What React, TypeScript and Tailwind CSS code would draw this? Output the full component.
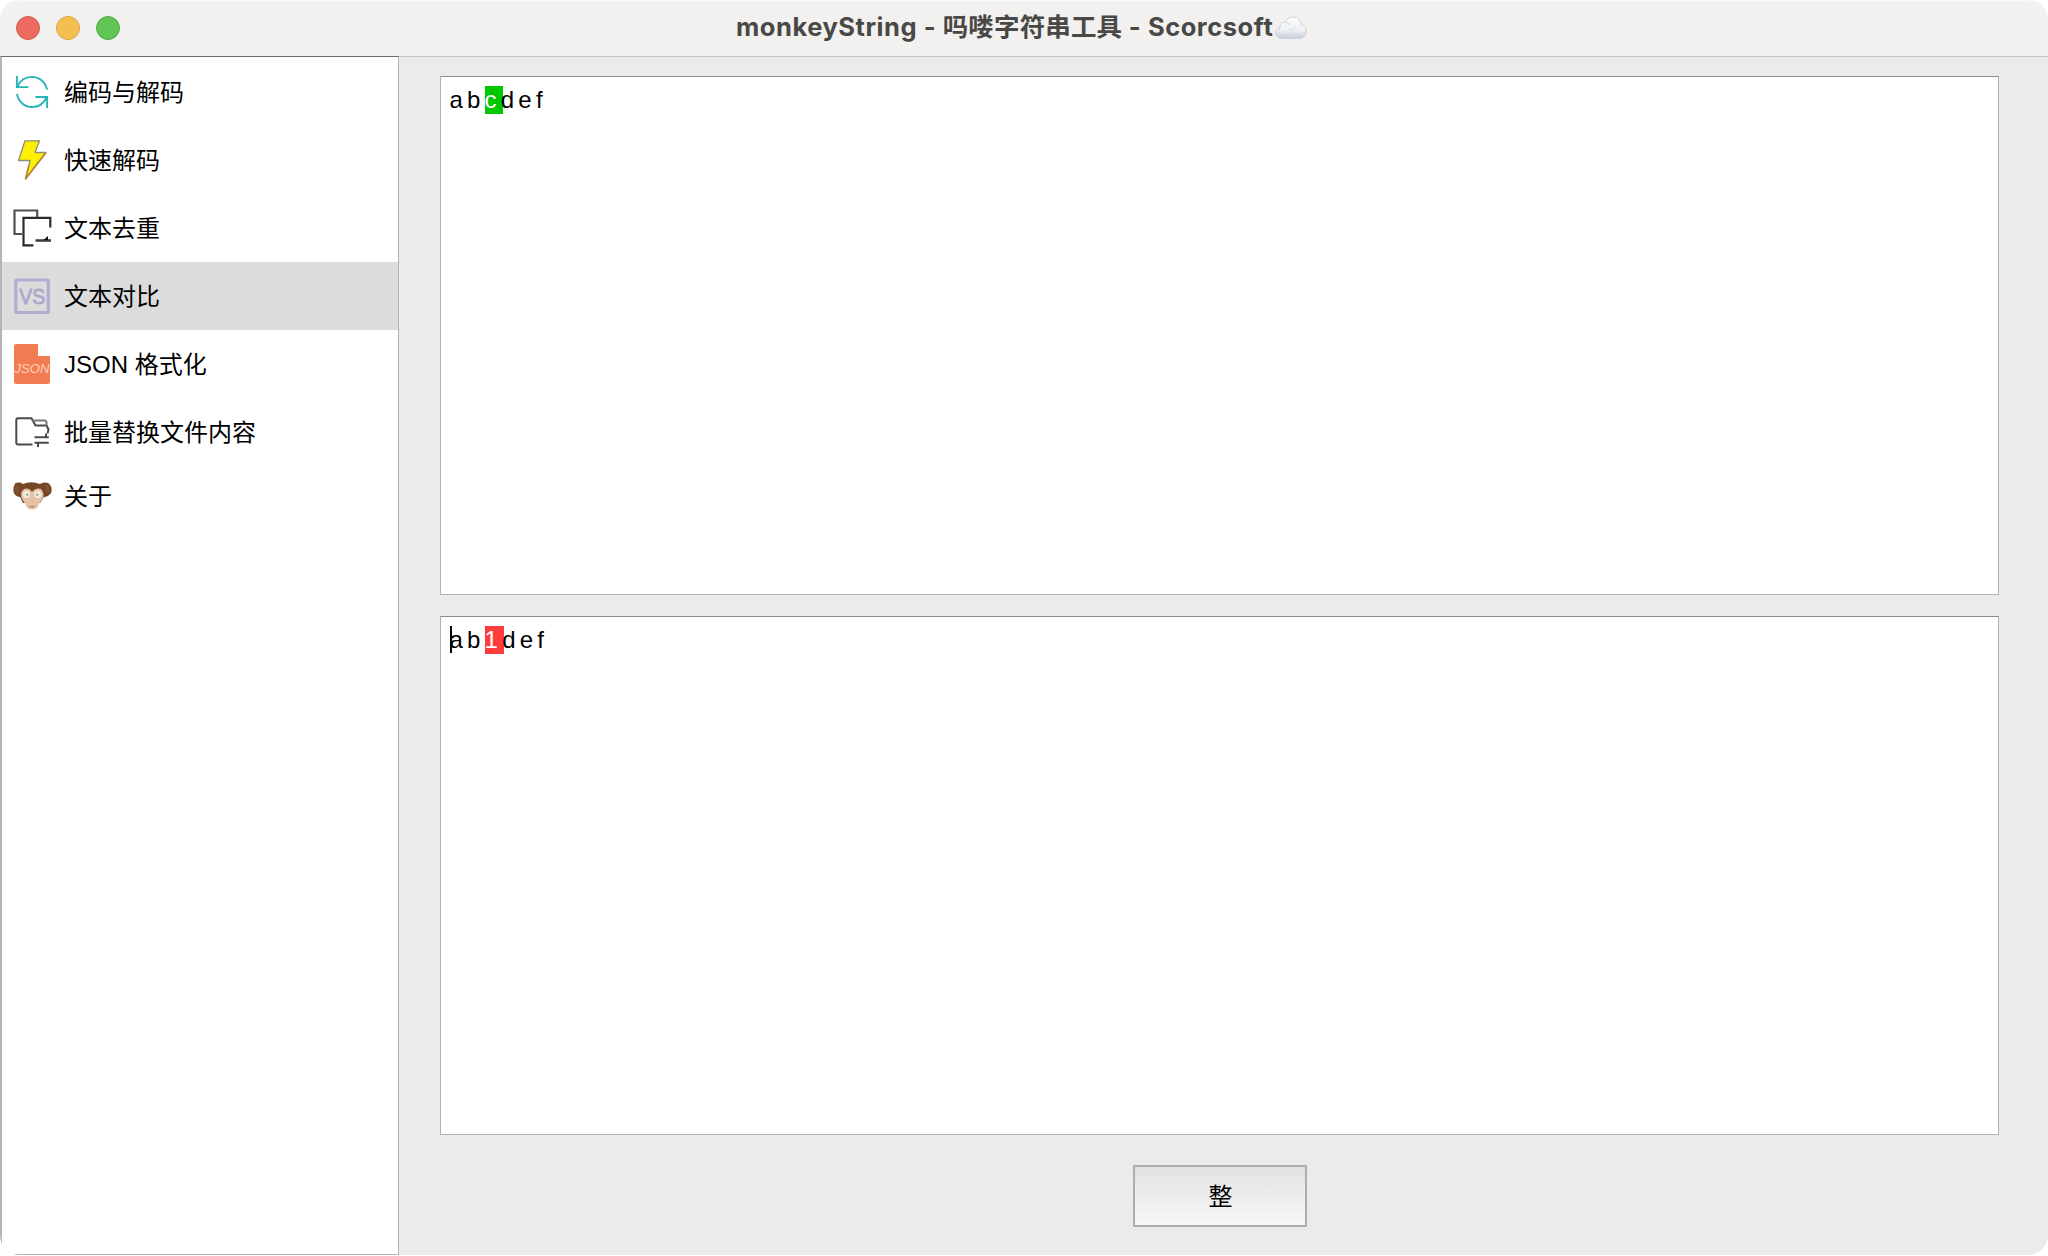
import type { ReactNode } from "react";

function SyncIcon() {
  return (
    <svg width="40" height="40" viewBox="0 0 40 40" fill="none" stroke="#27b5bb" strokeWidth="1.9">
      <path d="M4.9 4v11.1h11.4" />
      <path d="M5.5 14.5C8.5 7.800 14 4.900 20 4.900c7 0 13.200 4.600 15.100 12.700" />
      <path d="M35.100 36V25H23.500" />
      <path d="M34.500 25.500C31.500 32.200 26 35 20 35 13 35 6.800 30.400 4.900 22" />
    </svg>
  );
}

function BoltIcon() {
  return (
    <svg width="40" height="40" viewBox="0 0 40 40" strokeLinejoin="round">
      <path d="M13 0.800H27.500L23 12.500H34L13.500 39L18 20.500H6.500z" fill="#fdf000" stroke="#8e8c78" strokeWidth="1.300" />
      <path d="M34 12.500L13.500 39L17 25" fill="none" stroke="#b8863c" strokeWidth="1.500" />
    </svg>
  );
}

function DedupeIcon() {
  return (
    <svg width="40" height="40" viewBox="0 0 40 40" fill="none" stroke="#2b2b2b" strokeWidth="2.200">
      <path d="M25.200 9V2.500H2.500V26H10" stroke="#505050" />
      <path d="M38.300 19.500V9.900H11.500V37.300H21.500" />
      <path d="M23.500 32.500H39" stroke="#3a3a3a" strokeWidth="2.600" />
      <path d="M31.500 32L36 28V32z" fill="#111" stroke="none" />
    </svg>
  );
}

function VersusIcon() {
  return (
    <svg width="40" height="40" viewBox="0 0 40 40">
      <rect x="3.800" y="4" width="32.500" height="32.500" rx="1" fill="none" stroke="#b3acd0" strokeWidth="3.200" />
      <text x="20.300" y="27.500" textAnchor="middle" textLength="26" lengthAdjust="spacingAndGlyphs" fontSize="22" fontFamily="Liberation Sans, sans-serif" fill="#aea7cd" stroke="#aea7cd" strokeWidth=".8">VS</text>
    </svg>
  );
}

function JsonIcon() {
  return (
    <svg width="40" height="40" viewBox="0 0 40 40">
      <path d="M4 0H26V12H38V38Q38 40 36 40H4Q2 40 2 38V2Q2 0 4 0z" fill="#f27c52" />
      <path d="M27.500 0L38 11H27.500z" fill="#fdeee8" opacity=".4" />
      <text x="20" y="29" textAnchor="middle" textLength="35" lengthAdjust="spacingAndGlyphs" fontSize="13.500" fontStyle="italic" fontFamily="Liberation Sans, sans-serif" fill="#ffd0bc">JSON</text>
    </svg>
  );
}

function FolderSwapIcon() {
  return (
    <svg width="40" height="40" viewBox="0 0 40 40" fill="none" stroke="#4a4a4a" strokeWidth="2" strokeLinejoin="round">
      <path d="M20.500 32.500H6Q4.300 32.500 4.300 30.800V8Q4.300 6.300 6 6.300H19.500L23.500 13.500H34.500L36.500 17.500L35.500 21.500" />
      <path d="M20.500 8.500H33L34.500 10V13.500" stroke="#777" />
      <path d="M22.500 25.300H36.800M34 21.500V25.300" />
      <path d="M22.500 30.700H36.800M26 30.700V35" />
    </svg>
  );
}

function MonkeyIcon() {
  return (
    <svg width="40" height="40" viewBox="0 0 40 40">
      <path d="M3 7.500Q7 5.500 11 8Q19 4.500 28 8Q33 5.500 37 7.500Q41 12 39 17Q36 21 32 21L28 27H11L8 21Q3 20.500 1.500 16Q1 11 3 7.500z" fill="#754726" />
      <ellipse cx="5" cy="13.500" rx="2" ry="4" fill="#80522f" />
      <ellipse cx="35.500" cy="13.500" rx="2" ry="4" fill="#80522f" />
      <path d="M12 13Q17 11 20 16Q24 11 29 13Q33 17 30.500 23Q26 28 26 31Q20 36 14.500 31Q13 27 9.500 22Q8 16 12 13z" fill="#e6c1a4" />
      <circle cx="14.500" cy="18.500" r="3.700" fill="#efe9e0" />
      <circle cx="25.800" cy="18.500" r="3.700" fill="#efe9e0" />
      <circle cx="15.300" cy="18.700" r="1" fill="#8d8782" />
      <circle cx="25.200" cy="18.700" r="1" fill="#8d8782" />
      <path d="M17 30Q20 31.500 23 30" fill="none" stroke="#b58270" strokeWidth="1.300" />
    </svg>
  );
}

function CloudIcon() {
  return (
    <svg className="ml-[2px] block" width="32" height="24" viewBox="0 0 32 24">
      <defs>
        <linearGradient id="cloud" x1="0" y1="0" x2="0" y2="1">
          <stop offset="0" stopColor="#fbfcfd" />
          <stop offset=".6" stopColor="#eef1f5" />
          <stop offset="1" stopColor="#c6cdd6" />
        </linearGradient>
      </defs>
      <path d="M7.500 22.500C3 22.500.7 20 .7 16.800c0-3 2-5 4.300-5.400C4.900 7.800 7.500 6 10.300 6.300 11.500 3 14.500 1 18 1c4.500 0 7.600 3.200 7.800 7.200 3.300.7 5.500 3.500 5.500 7 0 4.300-3 7.300-7 7.300z" fill="url(#cloud)" stroke="#c8ced6" strokeWidth=".9" />
      <path d="M10.300 6.300c2 0 3.700 1 4.300 2.700M14 13c2.500 1 5.200.2 6.500-2M5 11.400c-.9 1-.9 2 0 3" fill="none" stroke="#d3d9e0" strokeWidth="1" />
    </svg>
  );
}

const items: { label: string; icon: ReactNode; active?: boolean; short?: boolean }[] = [
  { label: "编码与解码", icon: <SyncIcon /> },
  { label: "快速解码", icon: <BoltIcon /> },
  { label: "文本去重", icon: <DedupeIcon /> },
  { label: "文本对比", icon: <VersusIcon />, active: true },
  { label: "JSON 格式化", icon: <JsonIcon /> },
  { label: "批量替换文件内容", icon: <FolderSwapIcon /> },
  { label: "关于", icon: <MonkeyIcon />, short: true },
];

function Editor({ mark, markClass, caret }: { mark: string; markClass: string; caret?: boolean }) {
  return (
    <div className="h-[519px] shrink-0 border border-[#b2b2b2] border-t-[#8b8b8b] bg-white pt-[9px] pl-[8.500px]">
      <div className="relative flex h-7 items-center text-[24px] leading-7 tracking-[4.200px] text-black">
        {caret && <span className="absolute top-0 left-[0.500px] h-[27px] w-0.5 bg-black" />}
        <span>ab</span>
        <span className={markClass}>{mark}</span>
        <span className="relative">def</span>
      </div>
    </div>
  );
}

export default function App() {
  return (
    <div className="h-[1256px] w-[2048px] bg-white font-['Liberation_Sans','Noto_Sans_CJK_SC',sans-serif]">
      <div className="flex h-[1255px] flex-col overflow-hidden rounded-[20px] bg-[#ebebeb]">
        <header className="flex h-[57px] shrink-0 items-center border-t border-b border-t-[#f8f8f7] border-b-[#c3c3c3] bg-[#f2f1ef] pb-px pl-4">
          <div className="flex gap-4">
            <span className="size-6 rounded-full border border-[#d35b50] bg-[#ec6a5f]" />
            <span className="size-6 rounded-full border border-[#d9a440] bg-[#f4bf50]" />
            <span className="size-6 rounded-full border border-[#50ab43] bg-[#61c555]" />
          </div>
          <h1 className="ml-[616px] flex items-center pb-px font-['Inter','Noto_Sans_CJK_SC',sans-serif] text-[25.500px] font-bold whitespace-pre text-[#484847]">
            <span className="tracking-[0.540px]">
              monkeyString - <span className="tracking-[0.150px]">吗喽字符串工具</span> - Scorcsoft
            </span>
            <CloudIcon />
          </h1>
        </header>
        <div className="flex min-h-0 flex-1">
          <aside className="relative -mt-px w-[399px] shrink-0 border border-l-2 border-[#b5b5b5] border-t-[#6b6b6b] bg-white pt-px">
            <ul>
              {items.map((item) => (
                <li
                  key={item.label}
                  className={`flex items-center gap-3 pl-[10px] text-[24px] leading-none text-black ${item.short ? "h-[60px]" : "h-[68px]"} ${item.active ? "bg-[#dcdcdc]" : ""}`}
                >
                  {item.icon}
                  <span className="pt-[2px] whitespace-pre">{item.label}</span>
                </li>
              ))}
            </ul>
          </aside>
          <main className="flex flex-1 flex-col pt-[19px] pr-[49px] pl-[41px]">
            <Editor mark="c" markClass="-mr-[2px] bg-[#00c800] pr-[2px] text-white" />
            <div className="h-[21px] shrink-0" />
            <Editor mark="1" markClass="-mr-[2px] bg-[#ff3c3c] pr-[2px] text-white" caret />
            <button className="mt-[30px] h-[62px] w-[174px] shrink-0 self-center border-2 border-[#adadad] bg-linear-to-b from-[#e2e2e2] to-[#f7f7f7] pt-[2px] pl-[2px] text-[24px] text-black">
              整
            </button>
          </main>
        </div>
      </div>
    </div>
  );
}
